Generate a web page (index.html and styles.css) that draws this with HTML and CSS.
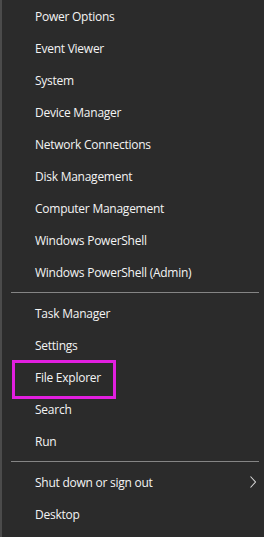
FILE: index.html
```html
<!DOCTYPE html>
<html lang="en">
<head>
  <meta charset="UTF-8" />
  <title>Quick Link Menu</title>
  <link rel="stylesheet" href="styles.css">
</head>
<body>
  <div class="menu">
    <div class="item">Power Options</div>
    <div class="item">Event Viewer</div>
    <div class="item">System</div>
    <div class="item">Device Manager</div>
    <div class="item">Network Connections</div>
    <div class="item">Disk Management</div>
    <div class="item">Computer Management</div>
    <div class="item">Windows PowerShell</div>
    <div class="item">Windows PowerShell (Admin)</div>
    <div class="sep"></div>
    <div class="item">Task Manager</div>
    <div class="item">Settings</div>
    <div class="item marked">File Explorer<span class="mark"></span></div>
    <div class="item">Search</div>
    <div class="item">Run</div>
    <div class="sep"></div>
    <div class="item">Shut down or sign out
      <svg class="chev" width="6" height="12" viewBox="0 0 6 12"><path d="M0.5 0.5 L5.5 6 L0.5 11.5" fill="none" stroke="#d8d8d8" stroke-width="1.1"/></svg>
    </div>
    <div class="item">Desktop</div>
  </div>
</body>
</html>
```
FILE: styles.css
```css
html, body {
  margin: 0;
  height: 100%;
  background: #2b2b2b;
}
body {
  border-left: 2px solid #4b4b4b;
  box-sizing: border-box;
  font-family: "Open Sans", "Noto Sans", sans-serif;
  color: #f4f4f4;
}
.menu {
  display: flex;
  flex-direction: column;
}
.item {
  position: relative;
  height: 32px;
  display: flex;
  align-items: center;
  padding-left: 33px;
  font-size: 12px;
  letter-spacing: -0.25px;
}
.sep {
  height: 9px;
  display: flex;
  align-items: center;
  padding: 0 5px 0 9px;
}
.sep::before {
  content: "";
  flex: 1;
  height: 1px;
  background: #858585;
}
.mark {
  position: absolute;
  left: 10px;
  top: -1px;
  width: 98px;
  height: 33px;
  border: 3px solid #e21fe0;
}
.chev {
  position: absolute;
  right: 8px;
  top: 10px;
}
```
